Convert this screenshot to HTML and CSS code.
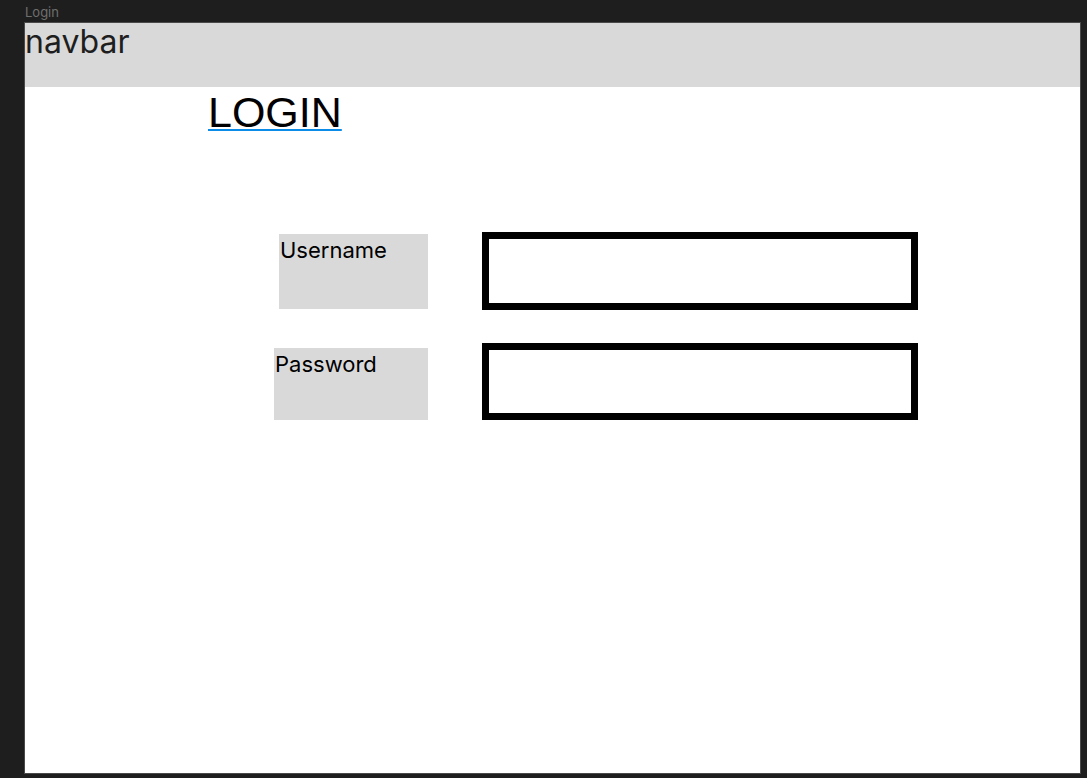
FILE: index.html
```html
<!DOCTYPE html>
<html lang="en">
<head>
<meta charset="utf-8">
<title>Login</title>
<link rel="stylesheet" href="styles.css">
</head>
<body>
  <div class="canvas">
    <div class="frame-label">Login</div>
    <div class="frame">
      <header class="navbar">navbar</header>
      <main class="content">
        <h1 class="title"><span class="title-text">LOGIN</span></h1>
        <div class="row row-user">
          <div class="label label-user">Username</div>
          <div class="field"></div>
        </div>
        <div class="row row-pass">
          <div class="label label-pass">Password</div>
          <div class="field field-pass"></div>
        </div>
      </main>
    </div>
  </div>
</body>
</html>
```

FILE: styles.css
```css
html, body {
  margin: 0;
  padding: 0;
  background: #1e1e1e;
}

body {
  width: 1087px;
  height: 778px;
  overflow: hidden;
  font-family: Inter, "Liberation Sans", sans-serif;
}

.canvas {
  padding-left: 25px;
}

.frame-label {
  height: 23px;
  font-size: 13px;
  line-height: 25px;
  color: #6f6f6f;
}

.frame {
  width: 1055px;
  height: 750px;
  background: #ffffff;
  display: flex;
  flex-direction: column;
  outline: 1px solid #4a4a4a;
}

.navbar {
  height: 64px;
  flex: none;
  background: #d9d9d9;
  font-size: 32px;
  line-height: 38px;
  color: #1e1e1e;
}

.content {
  flex: 1;
  display: flex;
  flex-direction: column;
}

.title {
  margin: 0 0 0 183px;
  font-family: "Liberation Sans", Arial, sans-serif;
  font-weight: normal;
  font-size: 43px;
  line-height: 50px;
  color: #000;
}

.title-text {
  text-decoration: underline;
  text-decoration-color: #0c8ce9;
  text-decoration-thickness: 2px;
  text-underline-offset: 2px;
}

.row {
  display: flex;
  align-items: flex-start;
  gap: 54px;
}

.row-user {
  margin-top: 95px;
  margin-left: 254px;
}

.row-pass {
  margin-top: 33px;
  margin-left: 249px;
}

.label {
  background: #d9d9d9;
  font-size: 22px;
  line-height: 26px;
  padding-top: 3px;
  color: #000;
  box-sizing: border-box;
}

.label-user {
  width: 149px;
  height: 75px;
  margin-top: 2px;
  padding-left: 1px;
}

.label-pass {
  width: 154px;
  height: 72px;
  margin-top: 5px;
  padding-left: 1px;
}

.field {
  width: 436px;
  height: 78px;
  border: 7px solid #000;
  box-sizing: border-box;
  background: #fff;
}

.field-pass {
  height: 77px;
}
```
